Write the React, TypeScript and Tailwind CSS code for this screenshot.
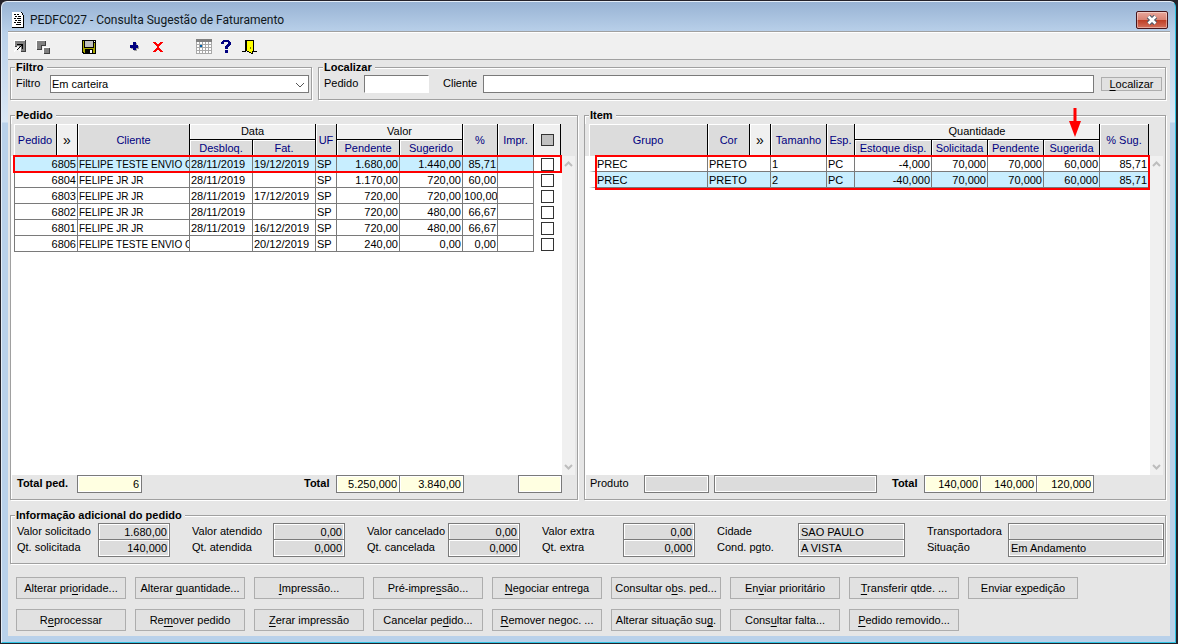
import { useState } from "react";
import type { InputHTMLAttributes, ReactNode } from "react";
import clsx from "clsx";

type Order = {
  id: string;
  customer: string;
  released: string;
  billing: string;
  uf: string;
  pending: string;
  suggested: string;
  pct: string;
};

const ORDERS: Order[] = [
  { id: "6805", customer: "FELIPE TESTE ENVIO C", released: "28/11/2019", billing: "19/12/2019", uf: "SP", pending: "1.680,00", suggested: "1.440,00", pct: "85,71" },
  { id: "6804", customer: "FELIPE JR JR", released: "28/11/2019", billing: "", uf: "SP", pending: "1.170,00", suggested: "720,00", pct: "60,00" },
  { id: "6803", customer: "FELIPE JR JR", released: "28/11/2019", billing: "17/12/2019", uf: "SP", pending: "720,00", suggested: "720,00", pct: "100,00" },
  { id: "6802", customer: "FELIPE JR JR", released: "28/11/2019", billing: "", uf: "SP", pending: "720,00", suggested: "480,00", pct: "66,67" },
  { id: "6801", customer: "FELIPE JR JR", released: "28/11/2019", billing: "16/12/2019", uf: "SP", pending: "720,00", suggested: "480,00", pct: "66,67" },
  { id: "6806", customer: "FELIPE TESTE ENVIO C", released: "", billing: "20/12/2019", uf: "SP", pending: "240,00", suggested: "0,00", pct: "0,00" },
];

const ITEMS = [
  { group: "PREC", color: "PRETO", size: "1", unit: "PC", stock: "-4,000", requested: "70,000", pending: "70,000", suggested: "60,000", pct: "85,71" },
  { group: "PREC", color: "PRETO", size: "2", unit: "PC", stock: "-40,000", requested: "70,000", pending: "70,000", suggested: "60,000", pct: "85,71" },
];

const INFO = [
  [{ label: "Valor solicitado", value: "1.680,00" }, { label: "Qt. solicitada", value: "140,000" }],
  [{ label: "Valor atendido", value: "0,00" }, { label: "Qt. atendida", value: "0,000" }],
  [{ label: "Valor cancelado", value: "0,00" }, { label: "Qt. cancelada", value: "0,000" }],
  [{ label: "Valor extra", value: "0,00" }, { label: "Qt. extra", value: "0,000" }],
];

// "&" marks the access key, as in a resource file
const ACTIONS = [
  "Alterar pri&oridade...",
  "Alterar &quantidade...",
  "&Impressão...",
  "Pré-impre&ssão...",
  "&Negociar entrega",
  "Consultar o&bs. ped...",
  "En&viar prioritário",
  "&Transferir qtde. ...",
  "Enviar e&xpedição",
  "R&eprocessar",
  "Re&mover pedido",
  "&Zerar impressão",
  "Cancelar pe&dido...",
  "&Remover negoc. ...",
  "Alterar situação su&g.",
  "Cons&ultar falta...",
  "&Pedido removido...",
];

function KeyLabel({ text }: { text: string }) {
  const i = text.indexOf("&");
  return (
    <>
      {text.slice(0, i)}
      <span className="underline underline-offset-2">{text[i + 1]}</span>
      {text.slice(i + 2)}
    </>
  );
}

function Group({ title, className, children }: { title: string; className?: string; children: ReactNode }) {
  return (
    <fieldset
      className={clsx(
        "min-w-0 border border-[#a0a0a0] pb-[6px] shadow-[1px_1px_0_#fff,inset_1px_1px_0_#fff]",
        className
      )}
    >
      <legend className="ml-1 h-[15px] bg-[#e6e6e6] px-px pr-[3px] text-[11px] leading-[15px] font-bold">
        {title}
      </legend>
      {children}
    </fieldset>
  );
}

function Field({ tone = "white", className, ...rest }: InputHTMLAttributes<HTMLInputElement> & { tone?: "white" | "gray" | "yellow" }) {
  return (
    <input
      type="text"
      readOnly={tone !== "white"}
      className={clsx(
        "h-[18px] min-w-0 border border-[#7a7a7a] px-[2px] outline-none",
        tone === "white" && "bg-white",
        tone === "gray" && "bg-[#dcdcdc] shadow-[inset_0_0_0_1px_#fff]",
        tone === "yellow" && "bg-[#ffffe1] shadow-[inset_0_0_0_1px_#fff]",
        className
      )}
      {...rest}
    />
  );
}

function Th({ children, plain, className, ...rest }: { children?: ReactNode; plain?: boolean; className?: string; colSpan?: number; rowSpan?: number }) {
  return (
    <th
      className={clsx(
        "border-r border-black p-0 text-center font-normal whitespace-nowrap shadow-[inset_1px_1px_0_#fff]",
        plain ? "bg-[#f0f0f0] leading-[15px]" : "bg-[#dcdcdc] text-[#000080]",
        className
      )}
      {...rest}
    >
      {children}
    </th>
  );
}

function Td({ children, right, className, colSpan }: { children?: ReactNode; right?: boolean; className?: string; colSpan?: number }) {
  return (
    <td
      colSpan={colSpan}
      className={clsx(
        "h-4 overflow-hidden border-r border-b border-[#7a7a7a] px-px pt-[2px] pb-0 leading-[13px] whitespace-nowrap",
        right && "text-right",
        className
      )}
    >
      {children}
    </td>
  );
}

function ScrollBar() {
  return (
    <div className="mt-8 mr-[2px] flex w-[13px] shrink-0 flex-col items-center justify-between bg-[#f0f0f0] py-[5px]">
      <svg width="9" height="6" viewBox="0 0 9 6" fill="none" stroke="#bdbdbd" strokeWidth="2">
        <path d="M1 5 4.500 1.500 8 5" />
      </svg>
      <svg width="9" height="6" viewBox="0 0 9 6" fill="none" stroke="#bdbdbd" strokeWidth="2">
        <path d="M1 1 4.500 4.500 8 1" />
      </svg>
    </div>
  );
}

function DocIcon() {
  return (
    <svg width="13" height="16" viewBox="0 0 13 16" shapeRendering="crispEdges">
      <path d="M0 0h9v1h1v1h1v1h1v12H0z" fill="#fff" />
      <path d="M0 15h12v1H0zM11 3h1v12h-1zM9 0h1v1H9zM10 1h1v2h-1z" fill="#000" />
      <path d="M2 2h2v1H2zM5 2h2v1H5zM3 4h2v1H3zM6 4h3v1H6zM2 6h2v1H2zM5 6h4v1H5zM3 8h2v1H3zM6 8h3v1H6zM2 10h2v1H2zM5 10h4v1H5zM4 12h5v1H4z" fill="#000" />
    </svg>
  );
}

function RestoreIcon() {
  return (
    <svg width="12" height="13" viewBox="0 0 12 13" shapeRendering="crispEdges">
      <path d="M1 1h10v10H7V7H5V6H1z" fill="#808080" />
      <path d="M0 0h11v1H1v5H0z" fill="#fff" />
      <path d="M11 0h1v12H7v-1h4zM1 6h2v1H1z" fill="#404040" />
      <path d="M3 4h6v5H8V6H7v1H6v1H5v1H4v1H3V9h1V8h1V7h1V6h1V5H3z" fill="#000" />
      <path d="M2 8h2v1H3v1H2v1H1v1H0v-2h1V9h1zM5 10h1v1H5zM6 8h1v2H6z" fill="#fff" />
    </svg>
  );
}

function CascadeIcon() {
  return (
    <svg width="14" height="14" viewBox="0 0 14 14" shapeRendering="crispEdges">
      <path d="M1 1h8v4H5v4H1zM8 8h5v5H8z" fill="#808080" />
      <path d="M0 0h10v1H1v8H0zM7 7h6v1H8v5H7z" fill="#fff" />
      <path d="M9 1h1v5H5V5h4zM5 6h1v4H1V9h4zM13 8h1v6H8v-1h5z" fill="#404040" />
    </svg>
  );
}

function SaveIcon() {
  return (
    <svg width="14" height="14" viewBox="0 0 14 14" shapeRendering="crispEdges">
      <path d="M0 0h14v14H1v-1H0z" fill="#000" />
      <path d="M1 1h1v11H1zM12 3h1v10h-1zM2 8h10v1H2zM2 9h1v4H2zM11 9h1v4h-1z" fill="#a8a800" />
      <path d="M3 1h8v6H3z" fill="#c0c0c0" />
      <path d="M12 1h1v1h-1zM8 10h2v3H8z" fill="#fff" />
    </svg>
  );
}

function AddIcon() {
  return (
    <svg width="10" height="10" viewBox="0 0 10 10" shapeRendering="crispEdges">
      <path d="M4 1h3v3h2v3H7v2H4V7H1V6h3z" fill="#a0a0a0" />
      <path d="M3 0h3v3h2v3H6v2H3V6H0V3h3z" fill="#000080" />
    </svg>
  );
}

function DeleteIcon() {
  return (
    <svg width="10" height="10" viewBox="0 0 10 10" shapeRendering="crispEdges">
      <path d="M0 0h3v1h1v1h2V1h1V0h3v1H9v1H8v1H7v1H6v2h1v1h1v1h1v1h1v1H7V9H6V8H4v1H3v1H0V9h1V8h1V7h1V6h1V4H3V3H2V2H1V1H0z" fill="#f00" />
    </svg>
  );
}

function CalendarIcon() {
  return (
    <svg width="16" height="15" viewBox="0 0 16 15" shapeRendering="crispEdges">
      <path d="M0 0h16v15H0z" fill="#a8a8a8" />
      <path d="M0 0h16v3H0z" fill="#808080" />
      <path d="M1 3h2v2H1zM4 3h2v2H4zM7 3h2v2H7zM10 3h2v2h-2zM13 3h2v2h-2zM1 6h2v2H1zM7 6h2v2H7zM10 6h2v2h-2zM13 6h2v2h-2zM1 9h2v2H1zM4 9h2v2H4zM7 9h2v2H7zM10 9h2v2h-2zM13 9h2v2h-2zM1 12h2v2H1zM4 12h2v2H4zM7 12h2v2H7zM10 12h2v2h-2zM13 12h2v2h-2z" fill="#fff" />
      <path d="M4 6h2v2H4z" fill="#0060a8" />
    </svg>
  );
}

function HelpIcon() {
  return (
    <svg width="11" height="13" viewBox="0 0 11 13" shapeRendering="crispEdges">
      <path d="M2 0h6v1h1v1h1v3H9v1H8v1H7v2H4V6h1V5h1V4h1V2H3v2H0V2h1V1h1zM4 10h3v3H4z" fill="#000080" />
    </svg>
  );
}

function ExitIcon() {
  return (
    <svg width="15" height="14" viewBox="0 0 15 14" shapeRendering="crispEdges">
      <path d="M3 0h9v11h3v1h-4V1H4v11H0v-1h3z" fill="#000" />
      <path d="M4 1h2v1h2v1h2v1h1v10H9v-1H7v-1H5v-1H4z" fill="#000" />
      <path d="M5 1h6v10h-1v2H9v-1H7v-1H5z" fill="#ff0" />
      <path d="M8 7h1v2H8z" fill="#808000" />
    </svg>
  );
}

const TOOLBAR = [
  [{ name: "Restaurar", Icon: RestoreIcon }, { name: "Cascata", Icon: CascadeIcon }],
  [{ name: "Salvar", Icon: SaveIcon }],
  [{ name: "Adicionar", Icon: AddIcon }, { name: "Excluir", Icon: DeleteIcon }],
  [{ name: "Calendário", Icon: CalendarIcon }, { name: "Ajuda", Icon: HelpIcon }, { name: "Sair", Icon: ExitIcon }],
];

function TitleBar() {
  return (
    <header className="flex h-[29px] items-center pt-[6px] pr-[2px] pl-1">
      <DocIcon />
      <h1 className="ml-[5px] flex-1 font-[Roboto,sans-serif] text-[12px] leading-4 text-[#101820]">
        PEDFC027 - Consulta Sugestão de Faturamento
      </h1>
      <button
        aria-label="Fechar"
        className="flex h-[18px] w-8 items-center justify-center rounded-[2px] border border-[#47151b] bg-[linear-gradient(#e8a79c_0%,#d98374_48%,#bd3c23_50%,#d4705c_100%)] shadow-[inset_0_0_0_1px_#ffffff66]"
      >
        <svg width="12" height="10" viewBox="0 0 12 10">
          <path d="M2.500 1.500 9.500 8.500M9.500 1.500 2.500 8.500" stroke="#4d5a6b" strokeWidth="4.800" />
          <path d="M2.500 1.500 9.500 8.500M9.500 1.500 2.500 8.500" stroke="#fff" strokeWidth="2.600" />
        </svg>
      </button>
    </header>
  );
}

function Toolbar() {
  return (
    <div className="flex h-[28px] gap-[23px] border-b border-[#a0a0a0] bg-[#f0f0f0] shadow-[inset_0_1px_0_#fff]">
      {TOOLBAR.map((group, i) => (
        <div key={i} className="flex">
          {group.map(({ name, Icon }) => (
            <button key={name} aria-label={name} className="flex w-[23px] items-center justify-center pt-[2px]">
              <Icon />
            </button>
          ))}
        </div>
      ))}
    </div>
  );
}

function OrdersTable() {
  const [marked, setMarked] = useState<string[]>([]);
  const toggle = (id: string) =>
    setMarked((m) => (m.includes(id) ? m.filter((x) => x !== id) : [...m, id]));

  return (
    <table className="w-[547px] table-fixed border-separate border-spacing-0">
      <colgroup>
        <col className="w-[43px]" />
        <col className="w-[21px]" />
        <col className="w-[112px]" />
        <col className="w-[63px]" />
        <col className="w-[63px]" />
        <col className="w-[21px]" />
        <col className="w-[63px]" />
        <col className="w-[63px]" />
        <col className="w-[35px]" />
        <col className="w-[36px]" />
        <col className="w-[27px]" />
      </colgroup>
      <thead>
        <tr className="h-4">
          <Th rowSpan={2}>Pedido</Th>
          <Th rowSpan={2} plain className="text-[14px]">»</Th>
          <Th rowSpan={2}>Cliente</Th>
          <Th colSpan={2} plain className="border-b">Data</Th>
          <Th rowSpan={2}>UF</Th>
          <Th colSpan={2} plain className="border-b">Valor</Th>
          <Th rowSpan={2}>%</Th>
          <Th rowSpan={2}>Impr.</Th>
          <Th rowSpan={2} plain>
            <input
              type="checkbox"
              aria-label="Marcar todos"
              className="mx-auto block h-3 w-[13px] appearance-none border border-[#333] bg-[#c0c0c0]"
            />
          </Th>
        </tr>
        <tr className="h-4 leading-4">
          <Th>Desbloq.</Th>
          <Th>Fat.</Th>
          <Th>Pendente</Th>
          <Th>Sugerido</Th>
        </tr>
      </thead>
      <tbody>
        {ORDERS.map((o, i) => {
          const current = i === 0;
          const bg = current ? "bg-[#c8eeff]" : "bg-white";
          return (
            <tr key={o.id} className={clsx("h-4", current && "outline-2 -outline-offset-1 outline-[#f00]")}>
              <Td colSpan={2} right className={clsx("border-l", bg)}>{o.id}</Td>
              <Td className={clsx("text-[10px]", bg)}>{o.customer}</Td>
              <Td className={bg}>{o.released}</Td>
              <Td className={bg}>{o.billing}</Td>
              <Td className={bg}>{o.uf}</Td>
              <Td right className={bg}>{o.pending}</Td>
              <Td right className={bg}>{o.suggested}</Td>
              <Td right className={bg}>{o.pct}</Td>
              <Td className={bg} />
              <td className="h-4 p-0 pr-px">
                <input
                  type="checkbox"
                  aria-label={`Marcar pedido ${o.id}`}
                  checked={marked.includes(o.id)}
                  onChange={() => toggle(o.id)}
                  className="mx-auto block h-[13px] w-[13px] appearance-none border border-[#333] bg-white checked:bg-[#333]"
                />
              </td>
            </tr>
          );
        })}
      </tbody>
    </table>
  );
}

function ItemsTable() {
  return (
    <table className="w-[560px] table-fixed border-separate border-spacing-0">
      <colgroup>
        <col className="w-[119px]" />
        <col className="w-[42px]" />
        <col className="w-[21px]" />
        <col className="w-[56px]" />
        <col className="w-[28px]" />
        <col className="w-[77px]" />
        <col className="w-[56px]" />
        <col className="w-[56px]" />
        <col className="w-[56px]" />
        <col className="w-[49px]" />
      </colgroup>
      <thead>
        <tr className="h-4">
          <Th rowSpan={2}>Grupo</Th>
          <Th rowSpan={2}>Cor</Th>
          <Th rowSpan={2} plain className="text-[14px]">»</Th>
          <Th rowSpan={2}>Tamanho</Th>
          <Th rowSpan={2}>Esp.</Th>
          <Th colSpan={4} plain className="border-b">Quantidade</Th>
          <Th rowSpan={2}>% Sug.</Th>
        </tr>
        <tr className="h-4 leading-4">
          <Th>Estoque disp.</Th>
          <Th>Solicitada</Th>
          <Th>Pendente</Th>
          <Th className="relative">
            Sugerida
            <svg className="absolute -top-8 left-[25px]" width="12" height="30" viewBox="0 0 12 30">
              <path d="M4.500 0h3v13H12L6 29 0 13h4.500z" fill="#f00" />
            </svg>
          </Th>
        </tr>
      </thead>
      <tbody>
        {ITEMS.map((it, i) => {
          const bg = i === 1 ? "bg-[#c8eeff]" : "bg-white";
          return (
            <tr key={it.size} className="h-4">
              <Td className={clsx("border-l-[7px] border-l-white", bg)}>{it.group}</Td>
              <Td colSpan={2} className={bg}>{it.color}</Td>
              <Td className={bg}>{it.size}</Td>
              <Td className={bg}>{it.unit}</Td>
              <Td right className={bg}>{it.stock}</Td>
              <Td right className={bg}>{it.requested}</Td>
              <Td right className={bg}>{it.pending}</Td>
              <Td right className={bg}>{it.suggested}</Td>
              <Td right className={bg}>{it.pct}</Td>
            </tr>
          );
        })}
      </tbody>
    </table>
  );
}

const LIST = "relative min-w-0 flex-1 bg-[linear-gradient(#e6e6e6_32px,#fff_32px)]";

export default function App() {
  return (
    <div className="flex min-h-screen flex-col bg-[#24222a] pt-px pr-[2px] pb-px pl-px font-['Liberation_Sans',Arial,sans-serif] text-[11px] leading-[14px] text-black">
      <div className="flex flex-1 flex-col rounded-t-[6px] border border-t-[#e4edf7] border-r-[#30c4e4] border-b-[#30c4e4] border-l-[#e4edf7] bg-[linear-gradient(#98b3d4_0px,#bad1ea_31px,#dbe8f5_120px,#b9d1ea_121px)] pr-[5px] pb-[6px] pl-[6px]">
        <TitleBar />
        <main className="flex flex-1 flex-col border-t border-[#a0a0a0] bg-[#e6e6e6]">
          <Toolbar />

          <div className="flex flex-1 flex-col pr-1 pl-[2px]">
            <div className="flex gap-[6px]">
              <Group title="Filtro" className="w-[302px] shrink-0">
                <div className="flex pr-[2px] pl-[5px]">
                  <label htmlFor="filtro" className="w-[34px] pt-px">Filtro</label>
                  <div className="relative flex-1">
                    <select
                      id="filtro"
                      className="block h-[18px] w-full appearance-none border border-[#7a7a7a] bg-white px-px leading-4"
                    >
                      <option>Em carteira</option>
                    </select>
                    <svg className="pointer-events-none absolute top-[7px] right-1" width="10" height="7" viewBox="0 0 10 7" fill="none" stroke="#555">
                      <path d="M1 1 5 5 9 1" />
                    </svg>
                  </div>
                </div>
              </Group>
              <Group title="Localizar" className="flex-1">
                <div className="flex pr-[3px] pl-[5px]">
                  <label htmlFor="pedido" className="w-10 pt-px">Pedido</label>
                  <Field id="pedido" className="w-[65px] border-r-white border-b-white" />
                  <label htmlFor="cliente" className="ml-[14px] w-10 pt-px">Cliente</label>
                  <Field id="cliente" className="flex-1" />
                  <button className="mt-[2px] ml-[7px] h-[14px] w-[61px] border border-[#adadad] bg-[#e1e1e1] leading-3">
                    <KeyLabel text="&Localizar" />
                  </button>
                </div>
              </Group>
            </div>

            <div className="mt-2 grid flex-1 grid-cols-[568px_1fr] gap-[6px]">
              <Group title="Pedido">
                <div className="flex h-full flex-col pt-px">
                  <div className="flex flex-1">
                    <div className={clsx(LIST, "pl-[3px]")}>
                      <OrdersTable />
                    </div>
                    <ScrollBar />
                  </div>
                  <div className="flex pl-[6px]">
                    <label htmlFor="total-ped" className="w-[60px] pt-px font-bold">Total ped.</label>
                    <Field id="total-ped" tone="yellow" className="w-[65px] text-right" defaultValue="6" />
                    <label htmlFor="total-valor" className="ml-[162px] w-8 pt-px font-bold">Total</label>
                    <Field id="total-valor" tone="yellow" className="w-16 text-right" defaultValue="5.250,000" />
                    <Field aria-label="Total sugerido" tone="yellow" className="-ml-px w-[65px] text-right" defaultValue="3.840,00" />
                    <Field aria-label="Total marcado" tone="yellow" className="ml-[54px] w-11 text-right" />
                  </div>
                </div>
              </Group>

              <Group title="Item">
                <div className="flex h-full flex-col pt-px">
                  <div className="flex flex-1">
                    <div className={clsx(LIST, "pl-1")}>
                      <ItemsTable />
                      <div className="pointer-events-none absolute top-[31px] left-[10px] h-[35px] w-[555px] border-2 border-[#f00]" />
                    </div>
                    <ScrollBar />
                  </div>
                  <div className="flex pl-[5px]">
                    <label htmlFor="produto" className="w-[54px] pt-px">Produto</label>
                    <Field id="produto" tone="gray" className="w-[65px]" />
                    <Field aria-label="Descrição do produto" tone="gray" className="ml-[5px] w-[163px]" />
                    <label htmlFor="total-item" className="ml-[15px] w-8 pt-px font-bold">Total</label>
                    <Field id="total-item" tone="yellow" className="w-[57px] text-right" defaultValue="140,000" />
                    <Field aria-label="Total pendente" tone="yellow" className="-ml-px w-[57px] text-right" defaultValue="140,000" />
                    <Field aria-label="Total sugerida" tone="yellow" className="-ml-px w-[58px] text-right" defaultValue="120,000" />
                  </div>
                </div>
              </Group>
            </div>

            <Group title="Informação adicional do pedido" className="mt-2">
              <div className="flex gap-[22px] pr-px pl-[6px]">
                {INFO.map((col) => (
                  <div key={col[0].label} className="flex flex-col">
                    {col.map(({ label, value }, i) => (
                      <div key={label} className={clsx("flex", i > 0 && "-mt-[2px]")}>
                        <label htmlFor={label} className="w-[81px] pt-px whitespace-nowrap">{label}</label>
                        <Field id={label} tone="gray" className="w-[72px] text-right" defaultValue={value} />
                      </div>
                    ))}
                  </div>
                ))}
                <div className="flex flex-col">
                  <div className="flex">
                    <label htmlFor="cidade" className="w-[81px] pt-px">Cidade</label>
                    <Field id="cidade" tone="gray" className="w-[107px]" defaultValue="SAO PAULO" />
                  </div>
                  <div className="-mt-[2px] flex">
                    <label htmlFor="cond" className="w-[81px] pt-px">Cond. pgto.</label>
                    <Field id="cond" tone="gray" className="w-[107px]" defaultValue="A VISTA" />
                  </div>
                </div>
                <div className="flex min-w-0 flex-1 flex-col">
                  <div className="flex">
                    <label htmlFor="transp" className="w-[81px] pt-px">Transportadora</label>
                    <Field id="transp" tone="gray" className="flex-1" />
                  </div>
                  <div className="-mt-[2px] flex">
                    <label htmlFor="situacao" className="w-[81px] pt-px">Situação</label>
                    <Field id="situacao" tone="gray" className="flex-1" defaultValue="Em Andamento" />
                  </div>
                </div>
              </div>
            </Group>

            <div className="mt-[13px] mb-[5px] grid grid-cols-[repeat(9,110px)] gap-x-[9px] gap-y-[10px] pl-[6px]">
              {ACTIONS.map((text) => (
                <button
                  key={text}
                  className="h-[22px] border border-[#adadad] bg-[#e1e1e1] text-center whitespace-nowrap"
                >
                  <KeyLabel text={text} />
                </button>
              ))}
            </div>
          </div>
        </main>
      </div>
    </div>
  );
}
